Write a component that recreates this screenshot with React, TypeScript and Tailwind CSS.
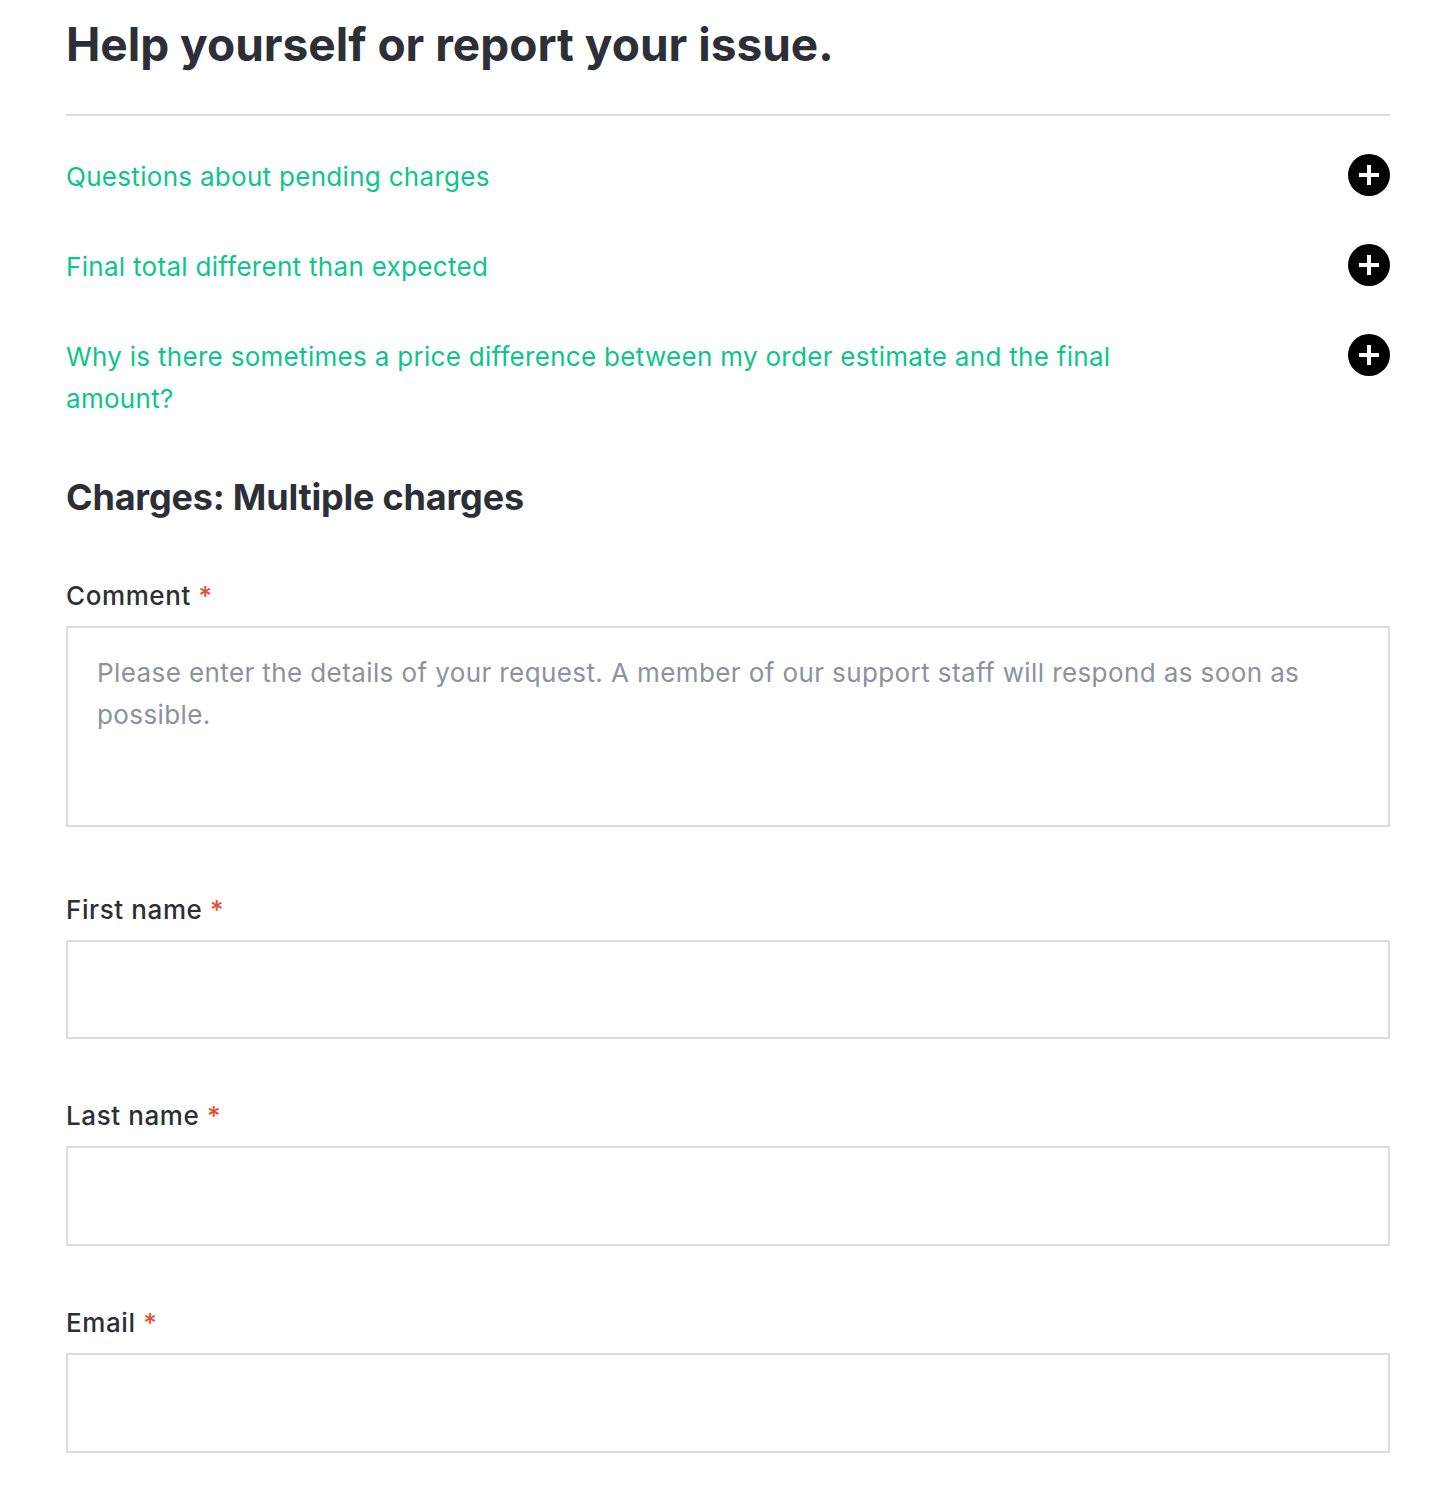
const FAQS = [
  'Questions about pending charges',
  'Final total different than expected',
  'Why is there sometimes a price difference between my order estimate and the final amount?',
]

function PlusIcon() {
  return (
    <svg fill="white" height="20" viewBox="0 0 20 20" width="20">
      <rect height="4" width="20" x="0" y="8" />
      <rect height="20" width="4" x="8" y="0" />
    </svg>
  )
}

function Label({ text }: { text: string }) {
  return (
    <label className="block text-[26px] leading-[30px] font-medium tracking-[0.6px] text-[#2c2f36]">
      {text} <span className="text-[#e0512b]">*</span>
    </label>
  )
}

export default function App() {
  return (
    <div className="min-h-[1496px] bg-white font-['Inter',sans-serif]">
      <div className="mx-[66px] w-[1324px] pt-[14px]">
        <h1 className="text-[46px] leading-[60px] font-bold text-[#2c2f36]">
          Help yourself or report your issue.
        </h1>

        <div className="mt-[40px] h-[2px] bg-[#dcdce0]" />

        {/* Accordion */}
        <div className="mt-[40px] flex flex-col gap-[48px]">
          {FAQS.map((q) => (
            <div className="flex items-start justify-between" key={q}>
              <p className="w-[1080px] text-[26px] leading-[42px] tracking-[0.3px] text-[#0bc58c]">{q}</p>
              <span className="-mt-[2px] flex h-[42px] w-[42px] shrink-0 items-center justify-center rounded-full bg-black">
                <PlusIcon />
              </span>
            </div>
          ))}
        </div>

        <h2 className="mt-[55px] text-[36px] leading-[44px] font-bold tracking-[-0.2px] text-[#2c2f36]">
          Charges: Multiple charges
        </h2>

        <form className="mt-[62px] flex flex-col">
          <Label text="Comment" />
          <textarea
            className="mt-[15px] h-[201px] resize-none border-2 border-[#dcdce0] px-[29px] py-[24px] text-[26px] leading-[42px] tracking-[0.4px] text-[#2c2f36] outline-none placeholder:text-[#8b92a0]"
            placeholder="Please enter the details of your request. A member of our support staff will respond as soon as possible."
          />

          <div className="mt-[68px]">
            <Label text="First name" />
          </div>
          <input className="mt-[15px] h-[99px] border-2 border-[#dcdce0] outline-none" type="text" />

          <div className="mt-[62px]">
            <Label text="Last name" />
          </div>
          <input className="mt-[15px] h-[100px] border-2 border-[#dcdce0] outline-none" type="text" />

          <div className="mt-[62px]">
            <Label text="Email" />
          </div>
          <input className="mt-[15px] h-[100px] border-2 border-[#dcdce0] outline-none" type="email" />
        </form>
      </div>
    </div>
  )
}
